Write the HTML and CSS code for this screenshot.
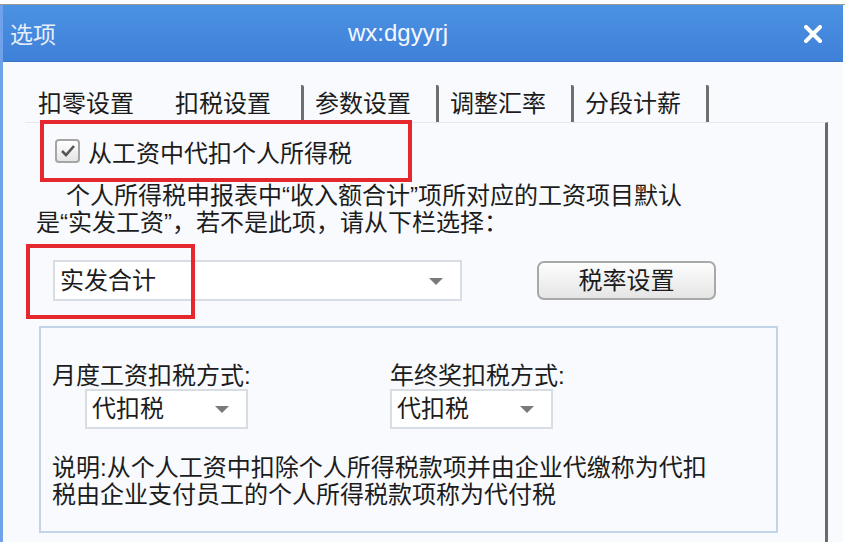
FILE: index.html
```html
<!DOCTYPE html>
<html lang="zh-CN">
  <head>
    <meta charset="UTF-8" />
    <title>选项</title>
    <link rel="stylesheet" href="styles.css">
  </head>
  <body>
    <div class="topline"></div>
    <div class="window">
      <div class="titlebar">
        <span class="title-app">选项</span>
        <span class="title-name">wx:dgyyrj</span>
        <span class="close">
          <svg width="18" height="18" viewBox="0 0 18 18">
            <path d="M2 2 L16 16 M16 2 L2 16" stroke="#fff" stroke-width="4" stroke-linecap="square" fill="none"/>
          </svg>
        </span>
      </div>
      <div class="content">
        <div class="tabs">
          <span class="tab tab-first">扣零设置</span>
          <span class="tab tab-active">扣税设置</span>
          <span class="tab">参数设置</span>
          <span class="tab">调整汇率</span>
          <span class="tab">分段计薪</span>
        </div>
        <div class="panel">
          <label class="check-row mark">
            <span class="checkbox">
              <svg width="16" height="14" viewBox="0 0 16 14">
                <path d="M2 7 L6 11 L14 2" stroke="#555" stroke-width="2.6" fill="none"/>
              </svg>
            </span>
            从工资中代扣个人所得税
          </label>
          <p class="intro">个人所得税申报表中“收入额合计”项所对应的工资项目默认<br>是“实发工资”，若不是此项，请从下栏选择：</p>
          <div class="select-row">
            <div class="select select-wide">实发合计<span class="arrow"></span></div>
            <button class="btn" type="button">税率设置</button>
            <div class="mark mark-select"></div>
          </div>
          <div class="group">
            <div class="group-grid">
              <div class="field">
                <div class="field-label">月度工资扣税方式:</div>
                <div class="select select-small select-indent">代扣税<span class="arrow"></span></div>
              </div>
              <div class="field">
                <div class="field-label">年终奖扣税方式:</div>
                <div class="select select-small">代扣税<span class="arrow"></span></div>
              </div>
            </div>
            <p class="note">说明:从个人工资中扣除个人所得税款项并由企业代缴称为代扣<br>税由企业支付员工的个人所得税款项称为代付税</p>
          </div>
        </div>
      </div>
    </div>
  </body>
</html>
```

FILE: styles.css
```css
body {
  margin: 0;
  background: #fff;
  font-family: "Liberation Sans", "Noto Sans CJK SC", sans-serif;
  color: #1c1c1c;
  overflow: hidden;
}
.topline {
  height: 4px;
  border-bottom: 1px solid #9a9a9a;
  background: #fff;
}
.window {
  width: 840px;
  height: 537px;
  border-left: 3px solid #6fa2ea;
  background: #f8fafd;
}
.titlebar {
  height: 57px;
  display: flex;
  align-items: center;
  background: linear-gradient(to bottom, #4b92e3, #3f80d8);
  border-bottom: 1px solid #3a74c6;
  box-sizing: border-box;
  color: #fff;
}
.title-app {
  width: 338px;
  padding-left: 7px;
  font-size: 23px;
  color: #e6eefa;
}
.title-name {
  font-size: 24px;
  color: #f4f8fe;
}
.close {
  margin-left: auto;
  margin-right: 21px;
  display: flex;
  margin-top: 2px;
}
.content {
  padding-top: 23px;
}
.tabs {
  display: flex;
  height: 37px;
  align-items: center;
  padding-left: 35px;
  font-size: 24px;
  line-height: 37px;
}
.tab {
  padding: 0 25px 0 11px;
  border-right: 3px solid #6e6e6e;
  border-radius: 0 2px 0 0;
}
.tab-first {
  padding: 0;
  margin-right: 41px;
  border-right: none;
}
.tab-active {
  padding: 0 30px 0 0;
}
.panel {
  margin-left: 22px;
  width: 800px;
  height: 420px;
  border-top: 1px solid #e4e8ee;
  border-right: 3px solid #6a6a6a;
  position: relative;
}
.mark {
  border: 4px solid #e5272e;
}
.check-row {
  margin: -3px 0 0 15px;
  width: 353px;
  height: 54px;
  display: flex;
  align-items: center;
  gap: 8px;
  padding-left: 11px;
  font-size: 24px;
}
.checkbox {
  width: 21px;
  height: 20px;
  border: 2px solid #a5a5a5;
  border-radius: 4px;
  background: linear-gradient(to bottom, #ffffff, #e4e4e4);
  display: flex;
  align-items: center;
  justify-content: center;
}
.intro {
  margin: 0 0 0 11px;
  font-size: 24px;
  line-height: 27px;
  text-indent: 30px;
}
.select-row {
  position: relative;
  display: flex;
  align-items: center;
  margin-top: 24px;
  padding-left: 28px;
  gap: 75px;
}
.select {
  position: relative;
  box-sizing: border-box;
  height: 41px;
  padding-left: 5px;
  border: 2px solid #d8dce3;
  background: #fff;
  font-size: 24px;
  line-height: 37px;
}
.select-wide {
  width: 409px;
}
.arrow {
  position: absolute;
  right: 17px;
  top: 16px;
  border-left: 7px solid transparent;
  border-right: 7px solid transparent;
  border-top: 7px solid #7a7a7a;
}
.btn {
  width: 179px;
  height: 39px;
  border: 2px solid #a8a8a8;
  border-radius: 7px;
  background: linear-gradient(to bottom, #fdfdfd, #e5e5e5);
  font-family: inherit;
  font-size: 24px;
  color: #1c1c1c;
  padding: 0;
  line-height: 35px;
}
.mark-select {
  position: absolute;
  left: 1px;
  top: -16px;
  width: 161px;
  height: 67px;
}
.group {
  margin: 25px 0 0 14px;
  width: 739px;
  height: 207px;
  box-sizing: border-box;
  border: 2px solid #c3d4ea;
  padding: 34px 0 0 11px;
}
.group-grid {
  display: grid;
  grid-template-columns: 338px 1fr;
}
.field-label {
  font-size: 24px;
  line-height: 27px;
}
.select-small {
  width: 163px;
  height: 40px;
  line-height: 36px;
}
.select-small .arrow {
  top: 15px;
}
.select-indent {
  margin-left: 33px;
}
.note {
  margin: 25px 0 0;
  font-size: 24px;
  line-height: 27px;
}
```
